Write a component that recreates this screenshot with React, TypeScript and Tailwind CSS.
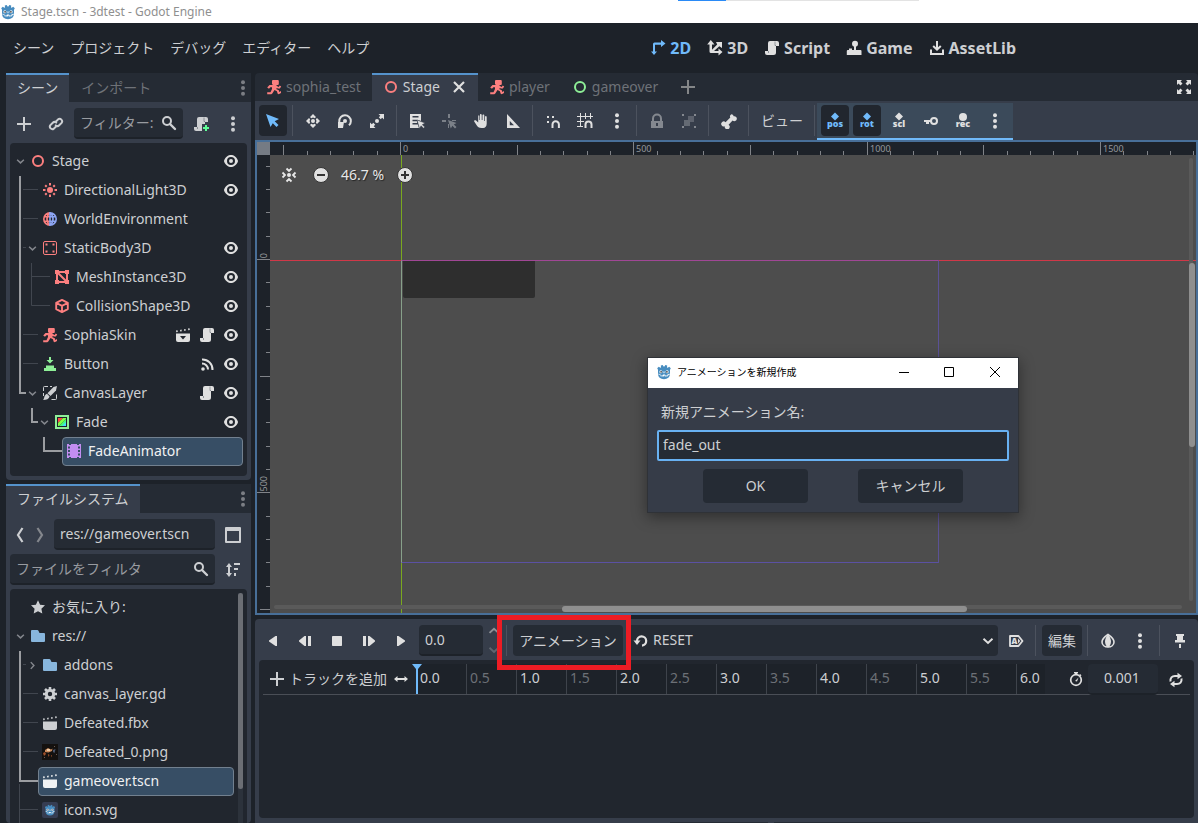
import React, { ReactNode } from 'react';

type IconProps = { className?: string };

type NodeRow = {
  label: string;
  depth: number;
  icon: ReactNode;
  arrow?: 'down' | 'right';
  badges?: { name: string; icon: ReactNode }[];
  selected?: boolean;
};

function Svg({ children, className = '', size = 16 }: { children: ReactNode; className?: string; size?: number }) {
  return (
    <svg width={size} height={size} viewBox="0 0 16 16" fill="currentColor" className={`shrink-0 ${className}`} aria-hidden="true">
      {children}
    </svg>
  );
}

/* ---------- icons ---------- */

const GodotIcon = ({ size = 16 }: { size?: number }) => (
  <Svg size={size}>
    <path
      d="M1.2 4.2 2.8 2.8l1.5.9.7-.3-.2-1.9L6.700 1l.8 1.500h1L9.300 1l1.900.5-.2 1.900.7.3 1.500-.9 1.600 1.400-.8 1.600V9.500c0 3.700-2.600 5.700-6 5.700s-6-2-6-5.700V5.800z"
      fill="#478cbf"
    />
    <path d="M2 9.700l2.300.3.300 1.500 2 .1.300-1h2.200l.3 1 2-.1.300-1.500 2.300-.3v.9l-1.500.2-.4 1.500-3.300.1-.3-1h-.4l-.3 1-3.300-.1-.4-1.500-1.500-.2z" fill="#fff" />
    <circle cx="4.900" cy="7.700" r="1.500" fill="#fff" />
    <circle cx="11.100" cy="7.700" r="1.500" fill="#fff" />
    <circle cx="5.100" cy="7.800" r=".9" fill="#414042" />
    <circle cx="10.900" cy="7.800" r=".9" fill="#414042" />
    <rect x="7.500" y="7.200" width="1" height="2" rx=".5" fill="#fff" />
  </Svg>
);

const RingIcon = ({ className }: IconProps) => (
  <Svg className={className}>
    <circle cx="8" cy="8" r="5" fill="none" stroke="currentColor" strokeWidth="2" />
  </Svg>
);

const EyeIcon = () => (
  <Svg>
    <path
      fillRule="evenodd"
      d="M8 2C5.443 2 2.209 3.948 1.045 7.705a1 1 0 0 0 0 .55C2.163 12.211 5.500 14 8 14s5.836-1.789 6.961-5.725a1 1 0 0 0 0-.55C13.861 3.935 10.554 2 8 2zm0 2a4 4 0 0 1 0 8 4 4 0 0 1 0-8zm0 2a2 2 0 0 0 0 4 2 2 0 0 0 0-4z"
    />
  </Svg>
);

const PlusIcon = ({ className }: IconProps) => (
  <Svg className={className}>
    <path d="M7 1v6H1v2h6v6h2V9h6V7H9V1z" />
  </Svg>
);

const LinkIcon = () => (
  <Svg>
    <g fill="none" stroke="currentColor" strokeWidth="2" strokeLinecap="round">
      <path d="M8.200 5.300l1.900-1.900a2.500 2.500 0 0 1 3.500 3.500l-2.400 2.400a2.500 2.500 0 0 1-3.400.1" />
      <path d="M7.800 10.700l-1.900 1.900a2.500 2.500 0 0 1-3.500-3.500l2.400-2.400a2.500 2.500 0 0 1 3.400-.1" />
    </g>
  </Svg>
);

const SearchIcon = () => (
  <Svg>
    <circle cx="6" cy="6" r="4" fill="none" stroke="currentColor" strokeWidth="2" />
    <path d="M9 9l5 5" stroke="currentColor" strokeWidth="2.400" strokeLinecap="round" />
  </Svg>
);

const ScriptIcon = ({ plus = false }: { plus?: boolean }) => (
  <Svg>
    <path d="M6 1a2 2 0 0 0-2 2v8H1v2a2 2 0 0 0 2 2h6.500A2.500 2.500 0 0 0 12 12.500V6h3V3a2 2 0 0 0-2-2z" />
    <path d="M11 1.500V5.500h1M4.500 11v2" fill="none" stroke="#363d4a" strokeOpacity=".45" />
    {plus && (
      <>
        <path d="M9 8h7v8H9z" fill="#363d4a" />
        <path d="M12 9v2h-2v2h2v2h2v-2h2v-2h-2V9z" fill="#5fff97" />
      </>
    )}
  </Svg>
);

const DotsIcon = ({ className }: IconProps) => (
  <Svg className={className}>
    <circle cx="8" cy="2.300" r="2" />
    <circle cx="8" cy="8" r="2" />
    <circle cx="8" cy="13.700" r="2" />
  </Svg>
);

const SunIcon = () => (
  <Svg className="text-[#fc7f7f]">
    <circle cx="8" cy="8" r="3" />
    <path d="M8 1v2.500M8 12.500V15M1 8h2.500M12.500 8H15M3.200 3.200l1.500 1.500M11.300 11.300l1.500 1.500M12.800 3.200l-1.500 1.500M4.700 11.300l-1.500 1.500" stroke="currentColor" strokeWidth="2" />
  </Svg>
);

const GlobeIcon = () => (
  <Svg>
    <g fill="none" strokeWidth="1.600">
      <path d="M8 1.800A6.200 6.200 0 0 0 8 14.200M7.900 1.800C4 5 4 11 7.900 14.200M2.300 5.700H8M2.300 10.300H8" stroke="#fc7f7f" />
      <path d="M8 1.800a6.200 6.200 0 0 1 0 12.400M8.100 1.800c3.900 3.200 3.900 9.200 0 12.400M8 5.700h5.700M8 10.300h5.700M8 1v14" stroke="#8da5f3" />
    </g>
  </Svg>
);

const StaticBodyIcon = () => (
  <Svg className="text-[#fc7f7f]">
    <rect x="1.500" y="1.500" width="13" height="13" rx="1.500" fill="none" stroke="currentColor" />
    <path d="M3.500 3.500h2v2h-2zM10.500 3.500h2v2h-2zM3.500 10.500h2v2h-2zM10.500 10.500h2v2h-2z" />
  </Svg>
);

const MeshIcon = () => (
  <Svg className="text-[#fc7f7f]">
    <path d="M3 3h10v10H3zM3 3l10 10" fill="none" stroke="currentColor" strokeWidth="2" />
    <path d="M1 1h4v4H1zM11 1h4v4h-4zM1 11h4v4H1zM11 11h4v4h-4z" />
  </Svg>
);

const CubeIcon = () => (
  <Svg className="text-[#fc7f7f]">
    <path d="M8 1.900l5.800 3v6.200L8 14.100l-5.800-3V4.900zM2.500 5L8 7.900 13.500 5M8 8v6" fill="none" stroke="currentColor" strokeWidth="1.900" strokeLinejoin="round" />
  </Svg>
);

const RunnerIcon = () => (
  <Svg className="text-[#fc7f7f]">
    <path d="M7 1h4.800a1 1 0 0 1 1 1v3a1 1 0 0 1-1 1H10.500v.8l2.200 1.100 1-1.400 1.500 1-1.300 2h-1.600L10.500 8.900v1.300l2.300 1.100.5 1.600 1.700-.8V14l-2.300 1.200-1-.4-.8-2.600L8.500 11l-2.200 3.500-1 .7H1.200v-2h3.300L6 10V8.200H4.300L3 9.800 1.200 8.500 3.500 6H6.500V5.200L6 5V2a1 1 0 0 1 1-1z" />
  </Svg>
);

const PressIcon = () => (
  <Svg className="text-[#8eef97]">
    <path d="M7 1v3H4.500L8 7.500 11.500 4H9V1zM4 9.500h8V12H4zM2 12h12v3H2z" />
  </Svg>
);

const CanvasLayerIcon = () => (
  <Svg>
    <path d="M6 1.500H2.500a1 1 0 0 0-1 1V6M14.500 9.500v4a1 1 0 0 1-1 1H9.500M1.500 8v3M10 1.500H8" fill="none" stroke="currentColor" />
    <path d="M15 1l-1 4.500-5.500 5.500L5.500 8.200 11.500 2z" />
    <path d="M5 8.700l2.600 2.800C7 14 4.500 15 1 15c1.500-1.300 1-5.300 4-6.300z" />
  </Svg>
);

const ColorRectIcon = () => (
  <Svg>
    <path d="M1 1h14v14H1z" fill="#8eef97" />
    <path d="M3 3h10v10H3z" fill="#1d2229" />
    <path d="M4 4h5L4 9z" fill="#ff4545" />
    <path d="M9 4h3v1L5 12H4V9z" fill="#80ff45" />
    <path d="M12 6v6H6z" fill="#45d7ff" />
    <path d="M12 5v3l-4 4H5z" fill="#45ff7a" />
  </Svg>
);

const FilmIcon = () => (
  <Svg className="text-[#c38ef1]">
    <path d="M1 1h2v1h2V1h6v1h2V1h2v14h-2v-1h-2v1H5v-1H3v1H1z" />
    <path d="M2 3.500h2v2H2zM2 7h2v2H2zM2 10.500h2v2H2zM12 3.500h2v2h-2zM12 7h2v2h-2zM12 10.500h2v2h-2z" fill="#374e65" />
  </Svg>
);

const ClapIcon = ({ arrow = false }: { arrow?: boolean }) => (
  <Svg>
    <path d="M1 3.600l1.500-.3.300 1.700-1.500.3zM5 2.900l1.500-.3.300 1.700-1.500.3zM9 2.200l1.500-.3.300 1.700-1.500.3zM13 1.500l1.500-.3.300 1.700-1.500.3z" />
    <path d="M1 6.500h14V13a2 2 0 0 1-2 2H3a2 2 0 0 1-2-2z" />
    {arrow && <path d="M5 9h6l-3 3.500z" fill="#21262e" />}
  </Svg>
);

const SignalIcon = () => (
  <Svg>
    <circle cx="4" cy="13" r="1.800" />
    <path d="M3 7.500a6 6 0 0 1 6 6M3 3.500a10 10 0 0 1 10.500 10.500" fill="none" stroke="currentColor" strokeWidth="2" />
  </Svg>
);

const StarIcon = () => (
  <Svg>
    <path d="M8 1.200l2.100 4.500 4.900.6-3.600 3.400.9 4.900L8 12.200l-4.300 2.400.9-4.900L1 6.300l4.900-.6z" />
  </Svg>
);

const FolderIcon = () => (
  <Svg className="text-[#88b6dd]">
    <path d="M2 2a1 1 0 0 0-1 1v10a1 1 0 0 0 1 1h12a1 1 0 0 0 1-1V6a1 1 0 0 0-1-1H9.500L8.300 2.600A1 1 0 0 0 7.400 2z" />
  </Svg>
);

const GearIcon = () => (
  <Svg>
    <circle cx="8" cy="8" r="3.700" fill="none" stroke="currentColor" strokeWidth="3" />
    <path d="M8 1v2.500M8 12.500V15M1 8h2.500M12.500 8H15M3 3l2 2M11 11l2 2M13 3l-2 2M5 11l-2 2" stroke="currentColor" strokeWidth="2.600" />
  </Svg>
);

const ThumbIcon = () => (
  <Svg>
    <path d="M0 0h16v16H0z" fill="#14110f" />
    <path d="M3 6l3-2 3 1.500 1.500-1L10 7 6.500 8.500 3 8z" fill="#c98a5d" />
    <path d="M1 9l2-1 1 2-2 2zM6 10l1.500 1-1 2zM9 11l1 .5-.5 2z" fill="#a4532c" />
    <path d="M5 5h3v2H5z" fill="#ecc9a4" />
    <path d="M11 6l2.500-1-1 4-1.500-1z" fill="#4b5870" />
    <path d="M2 13h1v1H2zM12 2h1v1h-1zM14 10h1v1h-1z" fill="#6b5a50" />
  </Svg>
);

const GodotTile = () => (
  <span className="flex size-4 shrink-0 items-center justify-center rounded-xs bg-[#363d52]">
    <GodotIcon size={12} />
  </span>
);

const Chevron = ({ dir, className = '' }: { dir: 'down' | 'right' | 'left' | 'up'; className?: string }) => (
  <Svg size={12} className={className}>
    {dir === 'down' && <path d="M2 5l6 5.500L14 5" fill="none" stroke="currentColor" strokeWidth="2.600" />}
    {dir === 'right' && <path d="M5 2l5.500 6L5 14" fill="none" stroke="currentColor" strokeWidth="2.600" />}
    {dir === 'left' && <path d="M10.500 1L6 8l4.500 7" fill="none" stroke="currentColor" strokeWidth="2.200" />}
    {dir === 'up' && <path d="M2 10.500L8 5l6 5.500" fill="none" stroke="currentColor" strokeWidth="2.600" />}
  </Svg>
);

/* ---------- small building blocks ---------- */

function IconButton({ label, children, active = false, className = 'w-7' }: { label: string; children: ReactNode; active?: boolean; className?: string }) {
  return (
    <button
      type="button"
      aria-label={label}
      className={`flex h-[31px] shrink-0 items-center justify-center rounded-sm ${className} ${active ? 'bg-[#21262e] text-[#70bafa]' : ''}`}
    >
      {children}
    </button>
  );
}

function Separator() {
  return (
    <div className="flex h-[31px] w-1 shrink-0 pl-px">
      <div className="w-px bg-[#4c525e]" />
    </div>
  );
}

function KeyIcon({ text, round = false }: { text: string; round?: boolean }) {
  return (
    <svg width="18" height="18" viewBox="0 0 18 18" fill="currentColor" aria-hidden="true">
      {round ? <circle cx="9" cy="5" r="4" /> : <path d="M9 .5L13 4.500 9 8.500 5 4.500z" />}
      <text x="9" y="15" textAnchor="middle" fontSize="9" fontWeight="900" fontFamily="Noto Sans, sans-serif">
        {text}
      </text>
    </svg>
  );
}

function TreeRow({ row }: { row: NodeRow }) {
  const indent = ['pl-1', 'pl-4', 'pl-7', 'pl-10'][row.depth];
  return (
    <li className={`flex h-[29px] ${indent}`}>
      <span className="flex w-3 shrink-0 items-center justify-center text-[#84878d]">
        {row.arrow && <Chevron dir={row.arrow} className="size-[9px]" />}
      </span>
      <div
        className={`flex min-w-0 flex-1 items-center rounded-sm border px-[3px] pb-0.5 ${
          row.selected ? 'border-[#72808f] bg-[#374e65] text-[#f0f1f2]' : 'border-transparent'
        }`}
      >
        {row.icon}
        <span className="ml-1.5 flex-1 truncate">{row.label}</span>
        <span className="flex gap-2 text-[#e0e0e0]">
          {row.badges?.map((b) => (
            <button key={b.name} type="button" aria-label={`${row.label} ${b.name}`}>
              {b.icon}
            </button>
          ))}
        </span>
      </div>
    </li>
  );
}

const eye = { name: 'visibility', icon: <EyeIcon /> };
const script = { name: 'script', icon: <ScriptIcon /> };

const sceneRows: NodeRow[] = [
  { label: 'Stage', depth: 0, arrow: 'down', icon: <RingIcon className="text-[#fc7f7f]" />, badges: [eye] },
  { label: 'DirectionalLight3D', depth: 1, icon: <SunIcon />, badges: [eye] },
  { label: 'WorldEnvironment', depth: 1, icon: <GlobeIcon /> },
  { label: 'StaticBody3D', depth: 1, arrow: 'down', icon: <StaticBodyIcon />, badges: [eye] },
  { label: 'MeshInstance3D', depth: 2, icon: <MeshIcon />, badges: [eye] },
  { label: 'CollisionShape3D', depth: 2, icon: <CubeIcon />, badges: [eye] },
  {
    label: 'SophiaSkin',
    depth: 1,
    icon: <RunnerIcon />,
    badges: [{ name: 'open scene', icon: <ClapIcon arrow /> }, script, eye],
  },
  { label: 'Button', depth: 1, icon: <PressIcon />, badges: [{ name: 'signals', icon: <SignalIcon /> }, eye] },
  { label: 'CanvasLayer', depth: 1, arrow: 'down', icon: <CanvasLayerIcon />, badges: [script, eye] },
  { label: 'Fade', depth: 2, arrow: 'down', icon: <ColorRectIcon />, badges: [eye] },
  { label: 'FadeAnimator', depth: 3, icon: <FilmIcon />, selected: true },
];

const fileRows: NodeRow[] = [
  { label: 'お気に入り:', depth: 0, icon: <StarIcon /> },
  { label: 'res://', depth: 0, arrow: 'down', icon: <FolderIcon /> },
  { label: 'addons', depth: 1, arrow: 'right', icon: <FolderIcon /> },
  { label: 'canvas_layer.gd', depth: 1, icon: <GearIcon /> },
  { label: 'Defeated.fbx', depth: 1, icon: <ClapIcon /> },
  { label: 'Defeated_0.png', depth: 1, icon: <ThumbIcon /> },
  { label: 'gameover.tscn', depth: 1, icon: <ClapIcon />, selected: true },
  { label: 'icon.svg', depth: 1, icon: <GodotTile /> },
];

/* ---------- left side ---------- */

function SceneDock() {
  return (
    <section className="flex shrink-0 flex-col rounded-sm bg-[#363d4a]">
      <div className="flex h-[29px] bg-[#252b34]">
        <button type="button" className="border-t-2 border-[#5593cc] bg-[#363d4a] px-[11px] pb-0.5">
          シーン
        </button>
        <button type="button" className="px-3 text-[#6e7278]">
          インポート
        </button>
        <button type="button" aria-label="Dock options" className="ml-auto text-[#7b7e84]">
          <DotsIcon />
        </button>
      </div>
      <div className="flex gap-1 px-1 py-1.5">
        <IconButton label="Add node">
          <PlusIcon />
        </IconButton>
        <IconButton label="Instance scene">
          <LinkIcon />
        </IconButton>
        <label className="flex h-[31px] min-w-0 flex-1 items-center rounded-sm border-b-2 border-[#1d2229] bg-[#252b34] px-1.5">
          <input aria-label="Filter nodes" placeholder="フィルター:" className="w-0 flex-1 outline-none placeholder:text-[#989ba0]" />
          <SearchIcon />
        </label>
        <IconButton label="Attach script">
          <ScriptIcon plus />
        </IconButton>
        <IconButton label="More scene options">
          <DotsIcon />
        </IconButton>
      </div>
      <div className="relative mx-1 -mt-0.5 mb-1 rounded-sm bg-[#21262e] py-1 pb-2.5">
        <svg className="absolute top-0 left-0" width="60" height="326" fill="none" aria-hidden="true">
          <g stroke="#41464f">
            <path d="M13 46.500h15M13 75.500h15M13 104.500h3M13 191.500h15M13 220.500h15" />
            <path d="M21.500 120v42.500H40M21.500 133.500H40" />
          </g>
          <g stroke="#9b9da1" strokeWidth="2">
            <path d="M10 33v217h6" />
            <path d="M22 265v14h6" />
            <path d="M34 294v14h18" />
          </g>
        </svg>
        <ul className="mr-1">
          {sceneRows.map((row) => (
            <TreeRow key={row.label} row={row} />
          ))}
        </ul>
      </div>
    </section>
  );
}

function FileSystemDock() {
  return (
    <section className="flex min-h-0 flex-1 flex-col rounded-sm bg-[#363d4a]">
      <div className="flex h-[29px] shrink-0 bg-[#252b34]">
        <button type="button" className="border-t-2 border-[#5593cc] bg-[#363d4a] px-[11px] pb-0.5">
          ファイルシステム
        </button>
        <button type="button" aria-label="Dock options" className="ml-auto text-[#7b7e84]">
          <DotsIcon />
        </button>
      </div>
      <div className="flex flex-col gap-1 px-1 pt-1.5 pb-1">
        <div className="flex">
          <IconButton label="Back" className="w-5">
            <Chevron dir="left" className="size-4" />
          </IconButton>
          <IconButton label="Forward" className="w-5 text-[#84878d]">
            <Chevron dir="left" className="size-4 rotate-180" />
          </IconButton>
          <input
            aria-label="Current path"
            defaultValue="res://gameover.tscn"
            className="ml-1 h-[31px] w-0 flex-1 rounded-sm border-b-2 border-[#1d2229] bg-[#252b34] px-1.5 outline-none"
          />
          <IconButton label="Toggle split mode" className="ml-1 w-7">
            <Svg>
              <path fillRule="evenodd" d="M1 0h14a1 1 0 0 1 1 1v14a1 1 0 0 1-1 1H1a1 1 0 0 1-1-1V1a1 1 0 0 1 1-1zm1 4v10h12V4z" />
            </Svg>
          </IconButton>
        </div>
        <div className="flex gap-1">
          <label className="flex h-[31px] flex-1 items-center rounded-sm border-b-2 border-[#1d2229] bg-[#252b34] px-1.5">
            <input aria-label="Filter files" placeholder="ファイルをフィルタ" className="w-0 flex-1 outline-none placeholder:text-[#989ba0]" />
            <SearchIcon />
          </label>
          <IconButton label="Sort files">
            <Svg>
              <path d="M4 1l3 4H5v6h2l-3 4-3-4h2V5H1zM9 1h6v2H9zM9 6h4v2H9zM9 11h2v3H9z" />
            </Svg>
          </IconButton>
        </div>
      </div>
      <div className="relative mx-1 flex min-h-0 flex-1 overflow-hidden rounded-t-sm bg-[#21262e] pt-1">
        <svg className="absolute top-0 left-0" width="40" height="240" fill="none" aria-hidden="true">
          <path d="M13 75.500h3M13 104.500h15M13 133.500h15M13 162.500h15M10 220.500h18M9.500 195v45" stroke="#41464f" />
          <path d="M10 62v130h18" stroke="#9b9da1" strokeWidth="2" />
        </svg>
        <ul className="flex-1">
          {fileRows.map((row) => (
            <TreeRow key={row.label} row={row} />
          ))}
        </ul>
        <div className="mx-1 w-[5px] bg-[#2c323b]">
          <div className="h-[196px] rounded-full bg-[#6b6e74]" />
        </div>
      </div>
    </section>
  );
}

/* ---------- 2D editor ---------- */

function SceneTabs() {
  return (
    <div className="flex h-7 shrink-0 items-stretch rounded-t-sm bg-[#252b34] text-[#6e7278]">
      <button type="button" className="flex items-center gap-1 px-[11px]">
        <RunnerIcon />
        sophia_test
      </button>
      <div className="flex items-center gap-1 border-t-2 border-[#5593cc] bg-[#363d4a] px-[11px] pb-0.5 text-[#cdcfd2]">
        <RingIcon className="text-[#fc7f7f]" />
        <button type="button">Stage</button>
        <button type="button" aria-label="Close tab" className="ml-[7px]">
          <Svg>
            <path d="M3 3l10 10M13 3L3 13" stroke="#e0e0e0" strokeWidth="2.200" />
          </Svg>
        </button>
      </div>
      <button type="button" className="flex items-center gap-1 px-[11px]">
        <RunnerIcon />
        player
      </button>
      <button type="button" className="flex items-center gap-1 px-[11px]">
        <RingIcon className="text-[#8eef97]" />
        gameover
      </button>
      <IconButton label="New scene" className="ml-[5px] w-7 self-center text-[#848688]">
        <PlusIcon />
      </IconButton>
      <IconButton label="Distraction free mode" className="ml-auto w-7 self-center text-[#e0e0e0]">
        <Svg>
          <path d="M1 1h5L4.500 2.500l2 2-2 2-2-2L1 6zM15 1v5l-1.500-1.500-2 2-2-2 2-2L10 1zM1 15v-5l1.500 1.500 2-2 2 2-2 2L6 15zM15 15h-5l1.500-1.500-2-2 2-2 2 2L15 10z" />
        </Svg>
      </IconButton>
    </div>
  );
}

function CanvasToolbar() {
  return (
    <div className="flex h-[39px] shrink-0 items-center gap-1 bg-[#363d4a] px-1 text-[#e0e0e0]">
      <IconButton label="Select mode" active>
        <Svg>
          <path d="M1 1l4.500 13 2.300-3.800L11.500 14l2-2-3.800-3.700L14 6z" />
        </Svg>
      </IconButton>
      <Separator />
      <IconButton label="Move mode">
        <Svg>
          <path d="M8 1l3 3-1.200 1.200L8 4.500l-1.800.7L5 4zM8 15l3-3-1.200-1.200L8 11.500l-1.800-.7L5 12zM1 8l3-3 1.200 1.200L4.500 8l.7 1.800L4 11zM15 8l-3-3-1.200 1.200.7 1.800-.7 1.800L12 11z" />
          <circle cx="8" cy="8" r="2" />
        </Svg>
      </IconButton>
      <IconButton label="Rotate mode">
        <Svg>
          <path d="M4.300 12.500A5.800 5.800 0 1 1 12 12.300" fill="none" stroke="currentColor" strokeWidth="2" />
          <path d="M1 9h6l-1 6H1z" />
          <circle cx="8" cy="8" r="2" />
        </Svg>
      </IconButton>
      <IconButton label="Scale mode">
        <Svg>
          <path d="M9.500 1H15v5.500l-1.800-1.800-1.500 1.500-1.900-1.900 1.500-1.500zM6.500 15H1V9.500l1.800 1.800 1.500-1.500 1.900 1.900-1.500 1.500z" />
          <circle cx="8" cy="8" r="2" />
        </Svg>
      </IconButton>
      <Separator />
      <IconButton label="List selectable nodes">
        <Svg>
          <path d="M1 1h11v7L8 6.800H3.500v1.500H8V10H3.500v1.500H9L10 15H1zM3.500 3v1.500h6V3z" fillRule="evenodd" />
          <path d="M8 7l2.500 8.500 1.600-2.700 2.400 2.500 1.300-1.300-2.500-2.300L16 10z" stroke="#363d4a" strokeWidth=".5" />
        </Svg>
      </IconButton>
      <IconButton label="Set pivot" className="w-7 text-[#7b8088]">
        <Svg>
          <path d="M7 1h2v4H7zM1 7h4v2H1zM7 11h1v4H7zM11 7h4v1h-4z" />
          <path d="M7 7l2.800 8.500 1.600-2.700 2.600 2.700 1.500-1.500-2.700-2.500L15.500 10z" />
        </Svg>
      </IconButton>
      <IconButton label="Pan mode">
        <Svg>
          <path d="M7 1.500c.8-.8 1.700-.3 1.700.5v5h.8V2.500c0-1.300 1.800-1.300 1.800 0V8h.7V4c0-1.200 1.700-1.200 1.700 0v6.500c0 2.800-1.500 4.500-3.500 4.500H8.500C6 15 4.500 14 3.500 12L1.200 8.500c-.5-1.200 1-1.800 1.900-1L5.200 9.500V3.200c0-1 1.200-1.200 1.200-.2v4H7z" />
        </Svg>
      </IconButton>
      <IconButton label="Ruler mode">
        <Svg>
          <path d="M2 1v14h13zm2.800 7l4.200 4.300H4.800z" fillRule="evenodd" />
        </Svg>
      </IconButton>
      <Separator />
      <IconButton label="Smart snap">
        <Svg>
          <path d="M2 3h2v2H2zM7 3h2v2H7zM2 8h2v2H2z" />
          <path d="M7.500 15v-3.500a3.200 3.200 0 0 1 6.400 0V15" fill="none" stroke="currentColor" strokeWidth="2" />
        </Svg>
      </IconButton>
      <IconButton label="Grid snap">
        <Svg>
          <path d="M3.500 0v14M8.500 0v6M13.500 0v6M0 3.500h16M0 8.500h7M0 13.500h6" stroke="currentColor" />
          <path d="M8.500 15v-3.500a3 3 0 0 1 6 0V15" fill="none" stroke="currentColor" strokeWidth="2" />
        </Svg>
      </IconButton>
      <IconButton label="Snapping options">
        <DotsIcon />
      </IconButton>
      <Separator />
      <IconButton label="Lock selected" className="w-7 text-[#84888f]">
        <Svg>
          <path d="M4 8V5.500a4 4 0 0 1 8 0V8" fill="none" stroke="currentColor" strokeWidth="2" />
          <path d="M2 8h12v7H2zm5 2v3h2v-3z" fillRule="evenodd" />
        </Svg>
      </IconButton>
      <IconButton label="Group selected" className="w-7 text-[#84888f]">
        <Svg>
          <path d="M1 1h2v2H1zM13 1h2v2h-2zM1 13h2v2H1zM13 13h2v2h-2z" />
          <path d="M7 3h6v6H9V7H7z" opacity=".5" />
          <path d="M3 7h6v6H3z" opacity=".6" />
        </Svg>
      </IconButton>
      <Separator />
      <IconButton label="Skeleton options">
        <Svg>
          <path d="M10.300 1.200a2.500 2.500 0 0 0-1 3.300L4.500 9.200a2.500 2.500 0 1 0-.7 4 2.500 2.500 0 1 0 3.800-1.500l4-4.200a2.500 2.500 0 1 0 1.100-4.200 2.500 2.500 0 0 0-2.400-2.100z" />
        </Svg>
      </IconButton>
      <Separator />
      <button type="button" className="h-[31px] shrink-0 px-1.5 text-[#cdcfd2]">
        ビュー
      </button>
      <div className="flex h-[39px] shrink-0 items-center">
        <Separator />
        <div className="flex h-[37px] items-center gap-1 self-end border-b-2 border-[#70bafa] bg-[#3b4a5a] px-1">
          <IconButton label="Key position" active>
            <KeyIcon text="pos" />
          </IconButton>
          <IconButton label="Key rotation" active>
            <KeyIcon text="rot" />
          </IconButton>
          <IconButton label="Key scale">
            <KeyIcon text="scl" />
          </IconButton>
          <IconButton label="Insert key">
            <Svg>
              <circle cx="11" cy="8" r="3" fill="none" stroke="currentColor" strokeWidth="2" />
              <path d="M1 7h7v2H6v2H3V9H1z" />
            </Svg>
          </IconButton>
          <IconButton label="Auto insert key">
            <KeyIcon text="rec" round />
          </IconButton>
          <IconButton label="Animation key options">
            <DotsIcon />
          </IconButton>
        </div>
      </div>
    </div>
  );
}

// One minor tick is 50 scene units at 46.7 % zoom.
const MINOR_STEP = 70 / 3;

function HorizontalRuler() {
  const ticks = Array.from({ length: 46 }, (_, i) => i - 6);
  return (
    <div className="absolute top-0 right-0 left-0 h-[13px] overflow-hidden bg-[#1d2229]">
      {ticks.map((n) => (
        <span
          key={n}
          className={`absolute bottom-0 w-px bg-[#808388] ${n % 10 === 0 ? 'h-[13px]' : n % 5 === 0 ? 'h-2.5' : 'h-1'}`}
          style={{ left: Math.round(143 + n * MINOR_STEP) }}
        >
          {n % 10 === 0 && <span className="absolute top-0.5 left-[3px] text-[9px] leading-none text-[#94979b]">{n * 50}</span>}
        </span>
      ))}
    </div>
  );
}

function VerticalRuler() {
  const ticks = Array.from({ length: 24 }, (_, i) => i - 4);
  return (
    <div className="absolute top-[13px] bottom-0 left-0 w-[13px] overflow-hidden bg-[#1d2229]">
      {ticks.map((n) => (
        <span
          key={n}
          className={`absolute right-0 h-px bg-[#808388] ${n % 10 === 0 ? 'w-[13px]' : n % 5 === 0 ? 'w-2.5' : 'w-1'}`}
          style={{ top: Math.round(104 + n * MINOR_STEP) }}
        >
          {n % 10 === 0 && (
            <span className="absolute bottom-0.5 left-0.5 rotate-180 text-[9px] leading-none text-[#94979b] [writing-mode:vertical-rl]">{n * 50}</span>
          )}
        </span>
      ))}
    </div>
  );
}

function Viewport() {
  return (
    <div className="relative min-h-0 flex-1 overflow-hidden border-2 border-[#486f98] bg-[#4d4d4d]">
      {/* axes, project frame and the fade rect */}
      <div className="absolute top-0 bottom-0 left-36 w-px bg-[#7aa81f]" />
      <div className="absolute top-[118px] right-0 left-0 h-px bg-[#d03848]" />
      <div className="absolute top-[119px] left-[146px] h-[37px] w-[132px] rounded-b-xs bg-[#2e2e2e]" />
      <div className="absolute top-[118px] left-36 h-[303px] w-[538px] border border-t-[#a04795] border-r-[#5b5296] border-b-[#5b51a3] border-l-[#87a08a]" />

      <HorizontalRuler />
      <VerticalRuler />
      <div className="absolute top-0 left-0 size-[13px] bg-[#757b84]" />

      <div className="absolute top-[19px] left-[18px] flex h-7 items-center text-[#e8e8e8]">
        <button type="button" aria-label="Center view" className="px-1.5">
          <Svg>
            <path d="M5.500 1.500L8 4l2.500-2.500M5.500 14.500L8 12l2.500 2.500M1.500 5.500L4 8l-2.500 2.500M14.500 5.500L12 8l2.500 2.500" fill="none" stroke="currentColor" strokeWidth="1.800" />
            <circle cx="8" cy="8" r="2" />
          </Svg>
        </button>
        <button type="button" aria-label="Zoom out" className="ml-1 px-1.5">
          <Svg>
            <circle cx="8" cy="8" r="7.500" fill="#e0e0e0" stroke="#333" />
            <path d="M4 7h8v2H4z" fill="#333" />
          </Svg>
        </button>
        <button type="button" className="w-14 pl-1.5 text-left [text-shadow:1px_1px_1px_#222]">
          46.7 %
        </button>
        <button type="button" aria-label="Zoom in" className="px-1.5">
          <Svg>
            <circle cx="8" cy="8" r="7.500" fill="#e0e0e0" stroke="#333" />
            <path d="M7 4v3H4v2h3v3h2V9h3V7H9V4z" fill="#333" />
          </Svg>
        </button>
      </div>

      <div className="absolute top-4 right-[3px] bottom-3 w-1 rounded-full bg-[#5a5a5a]" />
      <div className="absolute top-[121px] right-px h-[184px] w-1.5 rounded-full bg-[#8f8f8f]" />
      <div className="absolute right-3.5 bottom-1 left-[17px] h-1 rounded-full bg-[#5a5a5a]" />
      <div className="absolute bottom-px left-[305px] h-1.5 w-[405px] rounded-full bg-[#8f8f8f]" />
    </div>
  );
}

/* ---------- animation panel ---------- */

const seconds = ['0.0', '0.5', '1.0', '1.5', '2.0', '2.5', '3.0', '3.5', '4.0', '4.5', '5.0', '5.5', '6.0'];

function AnimationPanel() {
  return (
    <section className="shrink-0 rounded-t-sm bg-[#363d4a] px-1 pt-1.5">
      <div className="flex items-center gap-1 text-[#e0e0e0]">
        <IconButton label="Play backwards">
          <Svg>
            <path d="M12 3v10h-1.500L4 8.500v-1L10.500 3z" />
          </Svg>
        </IconButton>
        <IconButton label="Play backwards from end">
          <Svg>
            <path d="M9 3v10H7.500L2 8.500v-1L7.500 3zM11 3h3v10h-3z" />
          </Svg>
        </IconButton>
        <IconButton label="Stop">
          <Svg>
            <rect x="3" y="3" width="10" height="10" rx=".7" />
          </Svg>
        </IconButton>
        <IconButton label="Play from start">
          <Svg>
            <path d="M7 3v10h1.500L14 8.500v-1L8.500 3zM2 3h3v10H2z" />
          </Svg>
        </IconButton>
        <IconButton label="Play">
          <Svg>
            <path d="M4 3v10h1.500L12 8.500v-1L5.500 3z" />
          </Svg>
        </IconButton>
        <input
          aria-label="Animation position"
          defaultValue="0.0"
          className="h-[31px] w-16 rounded-sm border-b-2 border-[#1d2229] bg-[#252b34] px-1.5 text-[#cdcfd2] outline-none"
        />
        <span className="-ml-1 flex h-[31px] w-[18px] flex-col items-center justify-between pl-1 text-[#8d9096]">
          <Chevron dir="up" />
          <Chevron dir="down" className="text-[#5f656f]" />
        </span>
        <Separator />
        <div className="relative">
          <button type="button" className="h-[31px] w-[110px] rounded-sm bg-[#252b34] text-[#cdcfd2]">
            アニメーション
          </button>
          <div className="pointer-events-none absolute -top-2.5 -right-2 -bottom-3.5 -left-4 z-10 border-5 border-[#ed1c24]" />
        </div>
        <div className="relative flex flex-1 items-center">
          <span className="pointer-events-none absolute left-1.5">
            <Svg>
              <path d="M4 8a4.600 4.600 0 1 1 5 4.600" fill="none" stroke="currentColor" strokeWidth="2.200" />
              <path d="M.5 7.500h7L4 12z" />
            </Svg>
          </span>
          <select aria-label="Current animation" className="h-[31px] w-full appearance-none rounded-sm bg-[#252b34] pb-0.5 pl-[26px] text-[#cdcfd2] outline-none">
            <option>RESET</option>
          </select>
          <Chevron dir="down" className="pointer-events-none absolute right-1" />
        </div>
        <IconButton label="Autoplay on load">
          <Svg>
            <path d="M2 3h8.500L14.500 8l-4 5H2z" fill="none" stroke="currentColor" strokeWidth="1.800" strokeLinejoin="round" />
            <text x="3.500" y="11" fontSize="8" fontWeight="900" fontFamily="Noto Sans, sans-serif">
              A
            </text>
            <path d="M10 5.500l2.200 2.500-2.200 2.500z" />
          </Svg>
        </IconButton>
        <Separator />
        <button type="button" className="h-[31px] w-10 shrink-0 rounded-sm bg-[#252b34] text-[#cdcfd2]">
          編集
        </button>
        <Separator />
        <IconButton label="Onion skinning">
          <Svg>
            <path d="M8 1.500C5 3.500 2 5.500 2 9c0 3 2.700 5 6 5s6-2 6-5c0-3.500-3-5.500-6-7.500z" fill="none" stroke="currentColor" strokeWidth="1.600" />
            <path d="M8 1.500C6.300 3.500 5 6 5 8.500 5 11 6.200 13.500 8 14.500c1.800-1 3-3.500 3-6 0-2.500-1.300-5-3-7z" />
          </Svg>
        </IconButton>
        <IconButton label="Onion skinning options">
          <DotsIcon />
        </IconButton>
        <Separator />
        <IconButton label="Pin animation player">
          <Svg>
            <path d="M4 1h8v2h-1v4h2v2.500H3V7h2V3H4zM7 11h2v4H7z" />
          </Svg>
        </IconButton>
      </div>

      <div className="mt-1 flex h-[158px] flex-col rounded-sm bg-[#21262e] px-1 pt-1">
        <div className="flex h-[31px] border-b border-[#4a4e56]">
          <div className="flex w-[153px] shrink-0 items-center text-[#e0e0e0]">
            <button type="button" className="flex items-center gap-1 pl-1.5 text-[#cdcfd2]">
              <PlusIcon />
              トラックを追加
            </button>
            <Svg className="ml-1.5">
              <path d="M1 8l3.500-3v2h7V5L15 8l-3.500 3V9h-7v2z" />
            </Svg>
          </div>
          <div className="relative flex min-w-0 flex-1">
            <div className="flex min-w-0 flex-1 overflow-hidden bg-[#1d2229]">
              {seconds.map((s, i) => (
                <span
                  key={s}
                  className={`flex w-[50px] shrink-0 items-center border-l border-[#3e434b] pb-0.5 pl-[3px] ${i % 2 ? 'text-[#6c7076]' : 'text-[#cdcfd2]'}`}
                >
                  {s}
                </span>
              ))}
            </div>
            <svg className="absolute top-0 -left-1" width="10" height="30" fill="#70bafa" aria-hidden="true">
              <path d="M0 0h10L6 5v25H4V5z" />
            </svg>
          </div>
          <label className="flex shrink-0 items-center gap-1 pl-[23px] text-[#e0e0e0]">
            <Svg>
              <circle cx="8" cy="9" r="5.300" fill="none" stroke="currentColor" strokeWidth="1.700" />
              <path d="M6 1h4v1.500H9V4H7V2.500H6zM12 3l1.500 1.300-1 1-1.300-1.200zM7 10l3.500-3.500L9 10.500z" />
            </Svg>
            <input aria-label="Animation length (seconds)" defaultValue="0.001" className="h-[31px] w-[70px] rounded-sm border-b-2 border-[#1d2229] bg-[#252b34] pr-0.5 pb-0.5 text-center text-[#cdcfd2] outline-none" />
          </label>
          <IconButton label="Loop mode" className="ml-1 w-7 text-[#e0e0e0]">
            <Svg>
              <path d="M2.500 9.500C2 6 4 4 7 4h4M13.500 6.500C14 10 12 12 9 12H5" fill="none" stroke="currentColor" strokeWidth="2" />
              <path d="M9.500.800L14 4l-4.500 3.200zM6.500 8.800L2 12l4.500 3.200z" />
            </Svg>
          </IconButton>
        </div>
      </div>
      <div className="flex h-[5px] items-end justify-center gap-1.5 pl-[146px]">
        <div className="h-px w-[98px] bg-[#252b34]" />
        <div className="h-px w-[156px] bg-[#252b34]" />
      </div>
    </section>
  );
}

/* ---------- dialog ---------- */

function NewAnimationDialog() {
  return (
    <div
      role="dialog"
      aria-labelledby="new-animation-title"
      className="absolute top-[357px] left-[647px] z-20 w-[372px] border border-[#2f3237] bg-[#363c48] shadow-[0_4px_14px_rgba(0,0,0,0.4)]"
    >
      <div className="flex h-[30px] items-center bg-white pb-0.5 pl-2 text-black">
        <GodotIcon />
        <h1 id="new-animation-title" className="ml-[5px] flex-1 text-[10px]">
          アニメーションを新規作成
        </h1>
        <button type="button" aria-label="Minimize" className="flex w-[45px] justify-center">
          <svg width="10" height="10" stroke="#000">
            <path d="M0 5.500h10" />
          </svg>
        </button>
        <button type="button" aria-label="Maximize" className="flex w-[46px] justify-center">
          <svg width="10" height="10" stroke="#000" fill="none">
            <path d="M.5.5h9v9h-9z" />
          </svg>
        </button>
        <button type="button" aria-label="Close" className="flex w-[46px] justify-center">
          <svg width="10" height="10" stroke="#000">
            <path d="M0 0l10 10M10 0L0 10" />
          </svg>
        </button>
      </div>
      <div className="px-[9px] pt-2.5 pb-[9px]">
        <label htmlFor="animation-name" className="block h-8 px-1 leading-7">
          新規アニメーション名:
        </label>
        <input
          id="animation-name"
          defaultValue="fade_out"
          className="block h-[31px] w-full rounded-xs border-2 border-[#68b1f2] bg-[#252b34] px-1 pb-0.5 outline-none"
        />
        <div className="mt-2 flex justify-center gap-[50px]">
          <button type="button" className="h-[34px] w-[105px] rounded-sm bg-[#252b34]">
            OK
          </button>
          <button type="button" className="h-[34px] w-[105px] rounded-sm bg-[#252b34]">
            キャンセル
          </button>
        </div>
      </div>
    </div>
  );
}

export default function App() {
  return (
    <div className="relative flex h-screen flex-col overflow-hidden bg-[#1d2229] font-['Noto_Sans','Noto_Sans_CJK_JP',sans-serif] text-[14px] leading-5 whitespace-nowrap text-[#cdcfd2]">
      <header className="flex h-[23px] shrink-0 items-center gap-[5px] bg-white text-[12px] text-[#8f8f8f]">
        <GodotIcon />
        Stage.tscn - 3dtest - Godot Engine
        <div className="absolute top-0 left-[678px] flex h-px w-[241px] bg-[#e3e3e3]">
          <div className="w-12 bg-[#2a8af6]" />
        </div>
      </header>

      <div className="flex h-[50px] shrink-0 items-center justify-between pr-[182px] pl-[13px]">
        <nav className="flex gap-4">
          <button type="button">シーン</button>
          <button type="button">プロジェクト</button>
          <button type="button">デバッグ</button>
          <button type="button">エディター</button>
          <button type="button">ヘルプ</button>
        </nav>
        <nav className="flex gap-4 text-[16px] font-bold">
          <button type="button" className="flex items-center gap-1 text-[#70bafa]">
            <Svg>
              <path d="M4 15l-3-3.500h2V4a1.500 1.500 0 0 1 1.500-1.500H11V0l4.500 3.500L11 7V4.700H5v6.800h2z" />
            </Svg>
            2D
          </button>
          <button type="button" className="flex items-center gap-1">
            <Svg className="text-[#e0e0e0]">
              <path d="M3.800 0L7.500 4.500H5v5.200l5.200-5.200L9 2h6v6l-2.700-1.700L7 11h4.500V8.500l4 3.500-4 3.500V13H4a1.500 1.500 0 0 1-1.500-1.500v-7H.2z" />
            </Svg>
            3D
          </button>
          <button type="button" className="flex items-center gap-1">
            <span className="text-[#e0e0e0]">
              <ScriptIcon />
            </span>
            Script
          </button>
          <button type="button" className="flex items-center gap-1">
            <Svg className="text-[#e0e0e0]">
              <circle cx="9" cy="3.800" r="3" />
              <path d="M8 6h2v4h4.500a1 1 0 0 1 1 1v4H.8v-4a1 1 0 0 1 1-1H3V8.500h3V10h2z" />
            </Svg>
            Game
          </button>
          <button type="button" className="flex items-center gap-1">
            <Svg className="text-[#e0e0e0]">
              <path d="M8 1v8M4.200 6L8 9.700 11.800 6M2 9.500V14h12V9.500" fill="none" stroke="currentColor" strokeWidth="2" />
            </Svg>
            AssetLib
          </button>
        </nav>
      </div>

      <main className="flex min-h-0 flex-1 gap-1 pl-1.5">
        <aside className="flex w-[245px] shrink-0 flex-col gap-1">
          <SceneDock />
          <FileSystemDock />
        </aside>
        <div className="flex min-w-0 flex-1 flex-col">
          <SceneTabs />
          <CanvasToolbar />
          <Viewport />
          <div className="h-1 shrink-0" />
          <AnimationPanel />
        </div>
      </main>

      <NewAnimationDialog />
    </div>
  );
}
